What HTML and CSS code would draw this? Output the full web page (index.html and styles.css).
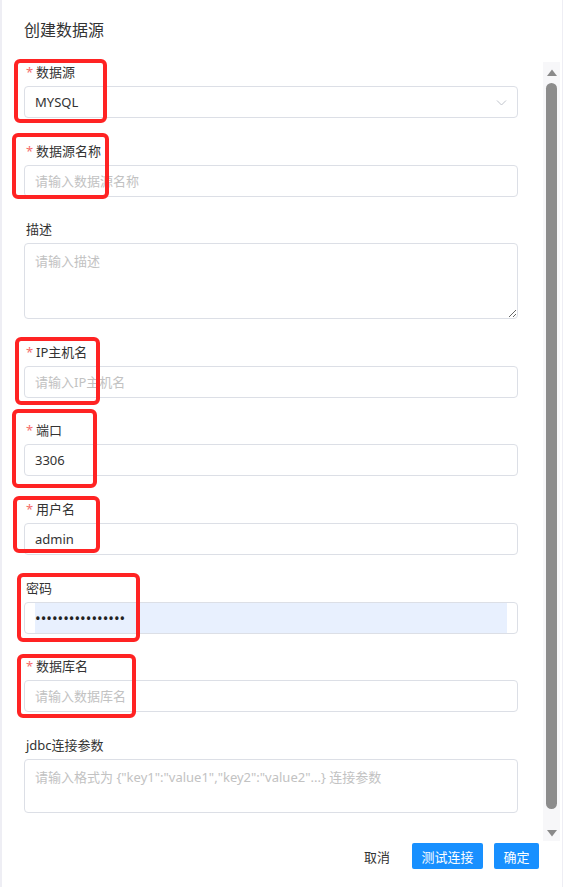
FILE: index.html
```html
<!DOCTYPE html>
<html lang="zh-CN">
<head>
<meta charset="utf-8">
<title>创建数据源</title>
<link rel="stylesheet" href="styles.css">
</head>
<body>
<div class="dialog">
  <header class="dialog-header"><h1 class="dialog-title">创建数据源</h1></header>
  <div class="dialog-body">
    <form class="form">
      <div class="form-item">
        <label class="form-label"><span class="req">*</span>数据源</label>
        <div class="select"><span class="select-value">MYSQL</span><svg class="chevron" width="11" height="11" viewBox="0 0 11 11"><polyline points="1,3.5 5.5,8 10,3.5" fill="none" stroke="#c0c4cc" stroke-width="1"/></svg></div>
      </div>
      <div class="form-item">
        <label class="form-label"><span class="req">*</span>数据源名称</label>
        <input class="input" type="text" placeholder="请输入数据源名称">
      </div>
      <div class="form-item">
        <label class="form-label">描述</label>
        <textarea class="textarea" placeholder="请输入描述"></textarea>
      </div>
      <div class="form-item">
        <label class="form-label"><span class="req">*</span>IP主机名</label>
        <input class="input" type="text" placeholder="请输入IP主机名">
      </div>
      <div class="form-item">
        <label class="form-label"><span class="req">*</span>端口</label>
        <input class="input" type="text" value="3306">
      </div>
      <div class="form-item">
        <label class="form-label"><span class="req">*</span>用户名</label>
        <input class="input" type="text" value="admin">
      </div>
      <div class="form-item">
        <label class="form-label">密码</label>
        <div class="input-wrap"><input class="input-inner" type="password" value="abcdefghijklmnop"></div>
      </div>
      <div class="form-item">
        <label class="form-label"><span class="req">*</span>数据库名</label>
        <input class="input" type="text" placeholder="请输入数据库名">
      </div>
      <div class="form-item">
        <label class="form-label">jdbc连接参数</label>
        <textarea class="textarea textarea-short" placeholder='请输入格式为 {"key1":"value1","key2":"value2"...} 连接参数'></textarea>
      </div>
    </form>
    <div class="scrollbar">
      <div class="sb-btn sb-up"><svg width="10" height="7" viewBox="0 0 10 7"><polygon points="0,7 5,0.5 10,7" fill="#8a8a8a"/></svg></div>
      <div class="sb-thumb"></div>
      <div class="sb-space"></div>
      <div class="sb-btn sb-down"><svg width="10" height="7" viewBox="0 0 10 7"><polygon points="0,0 10,0 5,6.5" fill="#8a8a8a"/></svg></div>
    </div>
  </div>
  <footer class="dialog-footer">
    <button class="btn btn-text" type="button">取消</button>
    <button class="btn btn-primary btn-test" type="button">测试连接</button>
    <button class="btn btn-primary btn-ok" type="button">确定</button>
  </footer>
  <div class="mark mark-1"></div>
  <div class="mark mark-2"></div>
  <div class="mark mark-3"></div>
  <div class="mark mark-4"></div>
  <div class="mark mark-5"></div>
  <div class="mark mark-6"></div>
  <div class="mark mark-7"></div>
</div>
</body>
</html>
```
FILE: styles.css
```css
* { box-sizing: border-box; }
html, body { margin: 0; padding: 0; background: #fff; }
body {
  font-family: "Noto Sans", "Noto Sans CJK SC", sans-serif;
  font-size: 13px;
  color: #333;
}
.dialog {
  position: relative;
  width: 563px;
  height: 887px;
  border-left: 2px solid #eeeef4;
  border-right: 1px solid #eeeef4;
  display: flex;
  flex-direction: column;
  overflow: hidden;
}
.dialog-header { height: 61px; flex: none; padding: 19px 0 0 22px; }
.dialog-title { margin: 0; font-size: 16px; font-weight: 400; line-height: 22px; color: #333; }

.dialog-body { height: 780px; flex: none; display: flex; padding-left: 22px; overflow: hidden; }
.form { width: 494px; flex: none; }
.form-item { margin-bottom: 21.6px; }
.form-label { display: block; height: 22px; line-height: 22px; padding-left: 2px; margin-bottom: 3px; color: #333; }
.req { display: inline-block; width: 10px; color: #f56c6c; }

.input, .select, .textarea, .input-wrap {
  display: block;
  width: 494px;
  border: 1px solid #dcdfe6;
  border-radius: 4px;
  background: #fff;
  font: inherit;
  color: #333;
  outline: none;
}
.input { height: 32px; padding: 0 10px; }
.input::placeholder, .textarea::placeholder { color: #c2c2c2; opacity: 1; }
.select { height: 32px; padding: 0 10px; display: flex; align-items: center; justify-content: space-between; }
.chevron { display: block; }
.textarea { height: 76px; padding: 6px 10px; line-height: 22px; resize: vertical; }
.textarea-short { height: 54px; resize: none; }
.input-wrap { height: 32px; padding: 0 10px; }
.input-inner {
  display: block;
  width: 100%;
  height: 100%;
  border: 0;
  padding: 0;
  background: #e8f0fe;
  font-family: inherit;
  font-size: 15px;
  color: #222;
  outline: none;
}

.scrollbar {
  width: 17px;
  flex: none;
  margin-left: 25px;
  margin-top: 1px;
  background: #f7f7f9;
  display: flex;
  flex-direction: column;
  align-items: center;
}
.sb-btn { display: flex; align-items: center; justify-content: center; width: 100%; flex: none; }
.sb-btn svg { display: block; }
.sb-up { height: 21px; }
.sb-down { height: 16px; }
.sb-thumb { width: 11px; height: 726px; flex: none; background: #8c8c8c; border-radius: 6px; }
.sb-space { flex: 1; }

.dialog-footer { display: flex; justify-content: flex-end; gap: 11px; padding: 2px 23px 0 0; }
.btn { height: 26px; border: 0; border-radius: 2px; font: inherit; padding: 0; cursor: pointer; }
.btn-text { width: 48px; background: transparent; color: #333; }
.btn-primary { background: #1890ff; color: #fff; }
.btn-test { width: 71px; }
.btn-ok { width: 45px; }

.mark { position: absolute; border: 4px solid #ff2323; border-radius: 6px; pointer-events: none; }
.mark-1 { left: 12px; top: 59px; width: 93px; height: 64px; }
.mark-2 { left: 10px; top: 133px; width: 97px; height: 66px; }
.mark-3 { left: 13px; top: 337px; width: 85px; height: 68px; }
.mark-4 { left: 10px; top: 409px; width: 85px; height: 79px; }
.mark-5 { left: 11px; top: 496px; width: 87px; height: 57px; }
.mark-6 { left: 15px; top: 573px; width: 123px; height: 69px; }
.mark-7 { left: 15px; top: 654px; width: 119px; height: 64px; }
```
